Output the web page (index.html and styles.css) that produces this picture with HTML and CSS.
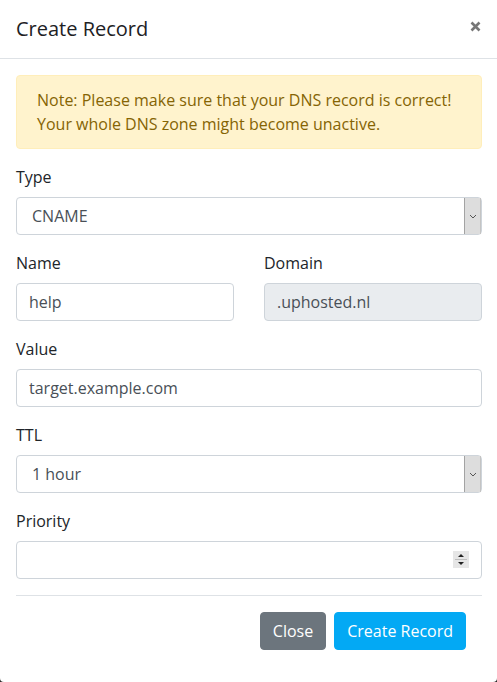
FILE: index.html
```html
<!DOCTYPE html>
<html lang="en">
<head>
<meta charset="utf-8">
<title>Create Record</title>
<link rel="stylesheet" href="styles.css">
</head>
<body>
<div class="modal">
  <div class="modal-header">
    <h5 class="modal-title">Create Record</h5>
    <button class="close" type="button" aria-label="Close">
      <svg width="11" height="11" viewBox="0 0 11 11"><path d="M1.5 1.5 L9.5 9.5 M9.5 1.5 L1.5 9.5" stroke="#777" stroke-width="2.6" stroke-linecap="butt"/></svg>
    </button>
  </div>
  <div class="modal-body">
    <div class="alert">Note: Please make sure that your DNS record is correct! Your whole DNS zone might become unactive.</div>

    <div class="form-group">
      <label class="label">Type</label>
      <div class="select-wrap">
        <select class="control select"><option>CNAME</option></select>
        <span class="select-btn"><svg width="8" height="5" viewBox="0 0 8 5"><path d="M1 1 L4 4 L7 1" fill="none" stroke="#555" stroke-width="1"/></svg></span>
      </div>
    </div>

    <div class="form-row">
      <div class="form-group">
        <label class="label">Name</label>
        <input class="control" type="text" value="help">
      </div>
      <div class="form-group">
        <label class="label">Domain</label>
        <input class="control" type="text" value=".uphosted.nl" readonly>
      </div>
    </div>

    <div class="form-group">
      <label class="label">Value</label>
      <input class="control" type="text" value="target.example.com">
    </div>

    <div class="form-group">
      <label class="label">TTL</label>
      <div class="select-wrap">
        <select class="control select"><option>1 hour</option></select>
        <span class="select-btn"><svg width="8" height="5" viewBox="0 0 8 5"><path d="M1 1 L4 4 L7 1" fill="none" stroke="#555" stroke-width="1"/></svg></span>
      </div>
    </div>

    <div class="form-group">
      <label class="label">Priority</label>
      <div class="number-wrap">
        <input class="control number" type="number">
        <span class="spinner">
          <svg width="16" height="17" viewBox="0 0 16 17">
            <rect x="0" y="0" width="16" height="17" fill="#e6e6e6"/>
            <line x1="2" y1="8.5" x2="14" y2="8.5" stroke="#bdbdbd" stroke-width="1"/>
            <path d="M5 6 L8 3 L11 6 Z" fill="#222"/>
            <path d="M5 11 L11 11 L8 14 Z" fill="#222"/>
          </svg>
        </span>
      </div>
    </div>
  </div>
  <div class="modal-footer">
    <button class="btn btn-secondary" type="button">Close</button>
    <button class="btn btn-primary" type="button">Create Record</button>
  </div>
</div>
</body>
</html>
```
FILE: styles.css
```css
* { box-sizing: border-box; }
html { background: #2b2b2b; }
body {
  margin: 0;
  font-family: "Open Sans", "Noto Sans", sans-serif;
  font-size: 16px;
  line-height: 24px;
  color: #212529;
}
.modal {
  background: #fff;
  min-height: 682px;
  border-radius: 0 0 4px 4px;
  display: flex;
  flex-direction: column;
}
.modal-header {
  display: flex;
  justify-content: space-between;
  align-items: flex-start;
  padding: 16px 16px 16px 16px;
  border-bottom: 1px solid #dee2e6;
}
.modal-title {
  margin: 0;
  font-size: 20px;
  line-height: 26px;
  font-weight: 500;
  color: #1d2124;
}
.close {
  border: 0;
  background: transparent;
  padding: 0;
  margin: 5px 0 0;
  width: 11px;
  height: 11px;
  display: flex;
  cursor: pointer;
}
.modal-body {
  padding: 16px 15px 0 16px;
}
.alert {
  background: #fff3cd;
  border: 1px solid #ffeeba;
  color: #856404;
  border-radius: 4px;
  padding: 12px 20px;
  margin-bottom: 16px;
}
.form-group {
  margin-bottom: 16px;
}
.form-row {
  display: grid;
  grid-template-columns: 1fr 1fr;
  column-gap: 30px;
}
.label {
  display: block;
  margin-bottom: 8px;
}
.control {
  display: block;
  width: 100%;
  height: 38px;
  padding: 6px 12px;
  font-family: inherit;
  font-size: 16px;
  line-height: 24px;
  color: #495057;
  background: #fff;
  border: 1px solid #ced4da;
  border-radius: 4px;
  outline: none;
}
.control[readonly] {
  background: #e9ecef;
}
.select-wrap, .number-wrap {
  position: relative;
}
.select {
  -webkit-appearance: none;
  appearance: none;
  padding-left: 15px;
}
.select-btn {
  position: absolute;
  right: 1px;
  top: 1px;
  width: 17px;
  height: 36px;
  background: #dddddd;
  border-left: 1px solid #a3a3a3;
  border-right: 1px solid #c4c4c4;
  display: flex;
  align-items: center;
  justify-content: center;
}
.number::-webkit-inner-spin-button,
.number::-webkit-outer-spin-button {
  -webkit-appearance: none;
  margin: 0;
}
.number { -moz-appearance: textfield; }
.spinner {
  position: absolute;
  right: 13px;
  top: 10px;
  width: 16px;
  height: 17px;
  display: flex;
}
.modal-footer {
  margin: 0 15px 0 16px;
  border-top: 1px solid #dee2e6;
  padding: 16px 16px 32px;
  display: flex;
  justify-content: flex-end;
  gap: 8px;
}
.btn {
  font-family: inherit;
  font-size: 16px;
  line-height: 24px;
  height: 38px;
  padding: 6px 12px;
  border: 1px solid transparent;
  border-radius: 4px;
  color: #fff;
  cursor: pointer;
}
.btn-secondary {
  background: #6c757d;
  border-color: #6c757d;
}
.btn-primary {
  background: #03a9f4;
  border-color: #03a9f4;
}
```
